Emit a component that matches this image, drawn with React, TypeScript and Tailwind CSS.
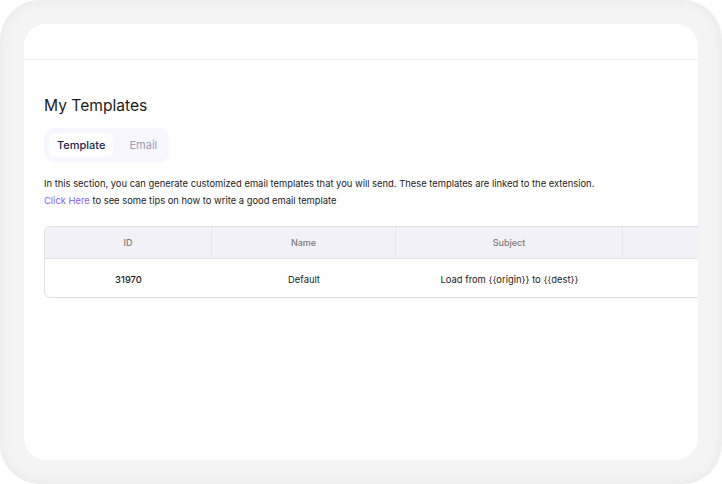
import React from "react";

export default function App() {
  return (
    <div className="w-[722px] h-[484px] bg-white" style={{ fontFamily: "Inter, 'Noto Sans', sans-serif" }}>
      <div className="w-full h-full rounded-[40px] bg-[#f4f4f4] shadow-[inset_0_0_14px_rgba(0,0,0,0.06)] p-[24px]">
        <div className="w-full h-full rounded-[22px] bg-white overflow-hidden flex flex-col">
          <div className="h-[36px] shrink-0 border-b border-[#efefef]" />
          <div className="pl-[20px] pt-[36px] flex flex-col">
            <h1 className="text-[15.6px] leading-[20px] text-[#1c1c1c] font-normal">My Templates</h1>
            <div className="mt-[12px] w-[125px] h-[34px] rounded-[10px] bg-[#f8f6fe] p-[5px] flex items-center gap-[8px]">
              <div className="h-[24px] px-[8px] rounded-[6px] bg-white flex items-center justify-center text-[11px] font-medium text-[#1e1f4b]">
                Template
              </div>
              <div className="px-[8px] flex items-center justify-center text-[11px] text-[#9b9cb8]">Email</div>
            </div>
            <p className="mt-[13px] text-[9.4px] leading-[17px] text-[#222] whitespace-nowrap">
              In this section, you can generate customized email templates that you will send. These templates are linked to the extension.
            </p>
            <p className="text-[9.4px] leading-[17px] text-[#222] whitespace-nowrap">
              <span className="text-[#8b5cf6]">Click Here</span> to see some tips on how to write a good email template
            </p>
            <div className="mt-[17px] w-[800px] shrink-0 rounded-[6px] border border-[#dedede] overflow-hidden">
              <div className="flex h-[32px] bg-[#f3f1f8] border-b border-[#e4e4e4] text-[9px] font-medium text-[#7a7a7a]">
                <div className="w-[167px] flex items-center justify-center border-r border-[#e6e4ec]">ID</div>
                <div className="w-[184px] flex items-center justify-center border-r border-[#e6e4ec]">Name</div>
                <div className="w-[227px] flex items-center justify-center border-r border-[#e6e4ec]">Subject</div>
                <div className="flex-1" />
              </div>
              <div className="flex h-[38px] pt-[5px] text-[9.4px] text-[#1c1c1c]">
                <div className="w-[167px] flex items-center justify-center font-medium">31970</div>
                <div className="w-[184px] flex items-center justify-center">Default</div>
                <div className="w-[227px] flex items-center justify-center">Load from {"{{origin}}"} to {"{{dest}}"}</div>
                <div className="flex-1" />
              </div>
            </div>
          </div>
        </div>
      </div>
    </div>
  );
}
